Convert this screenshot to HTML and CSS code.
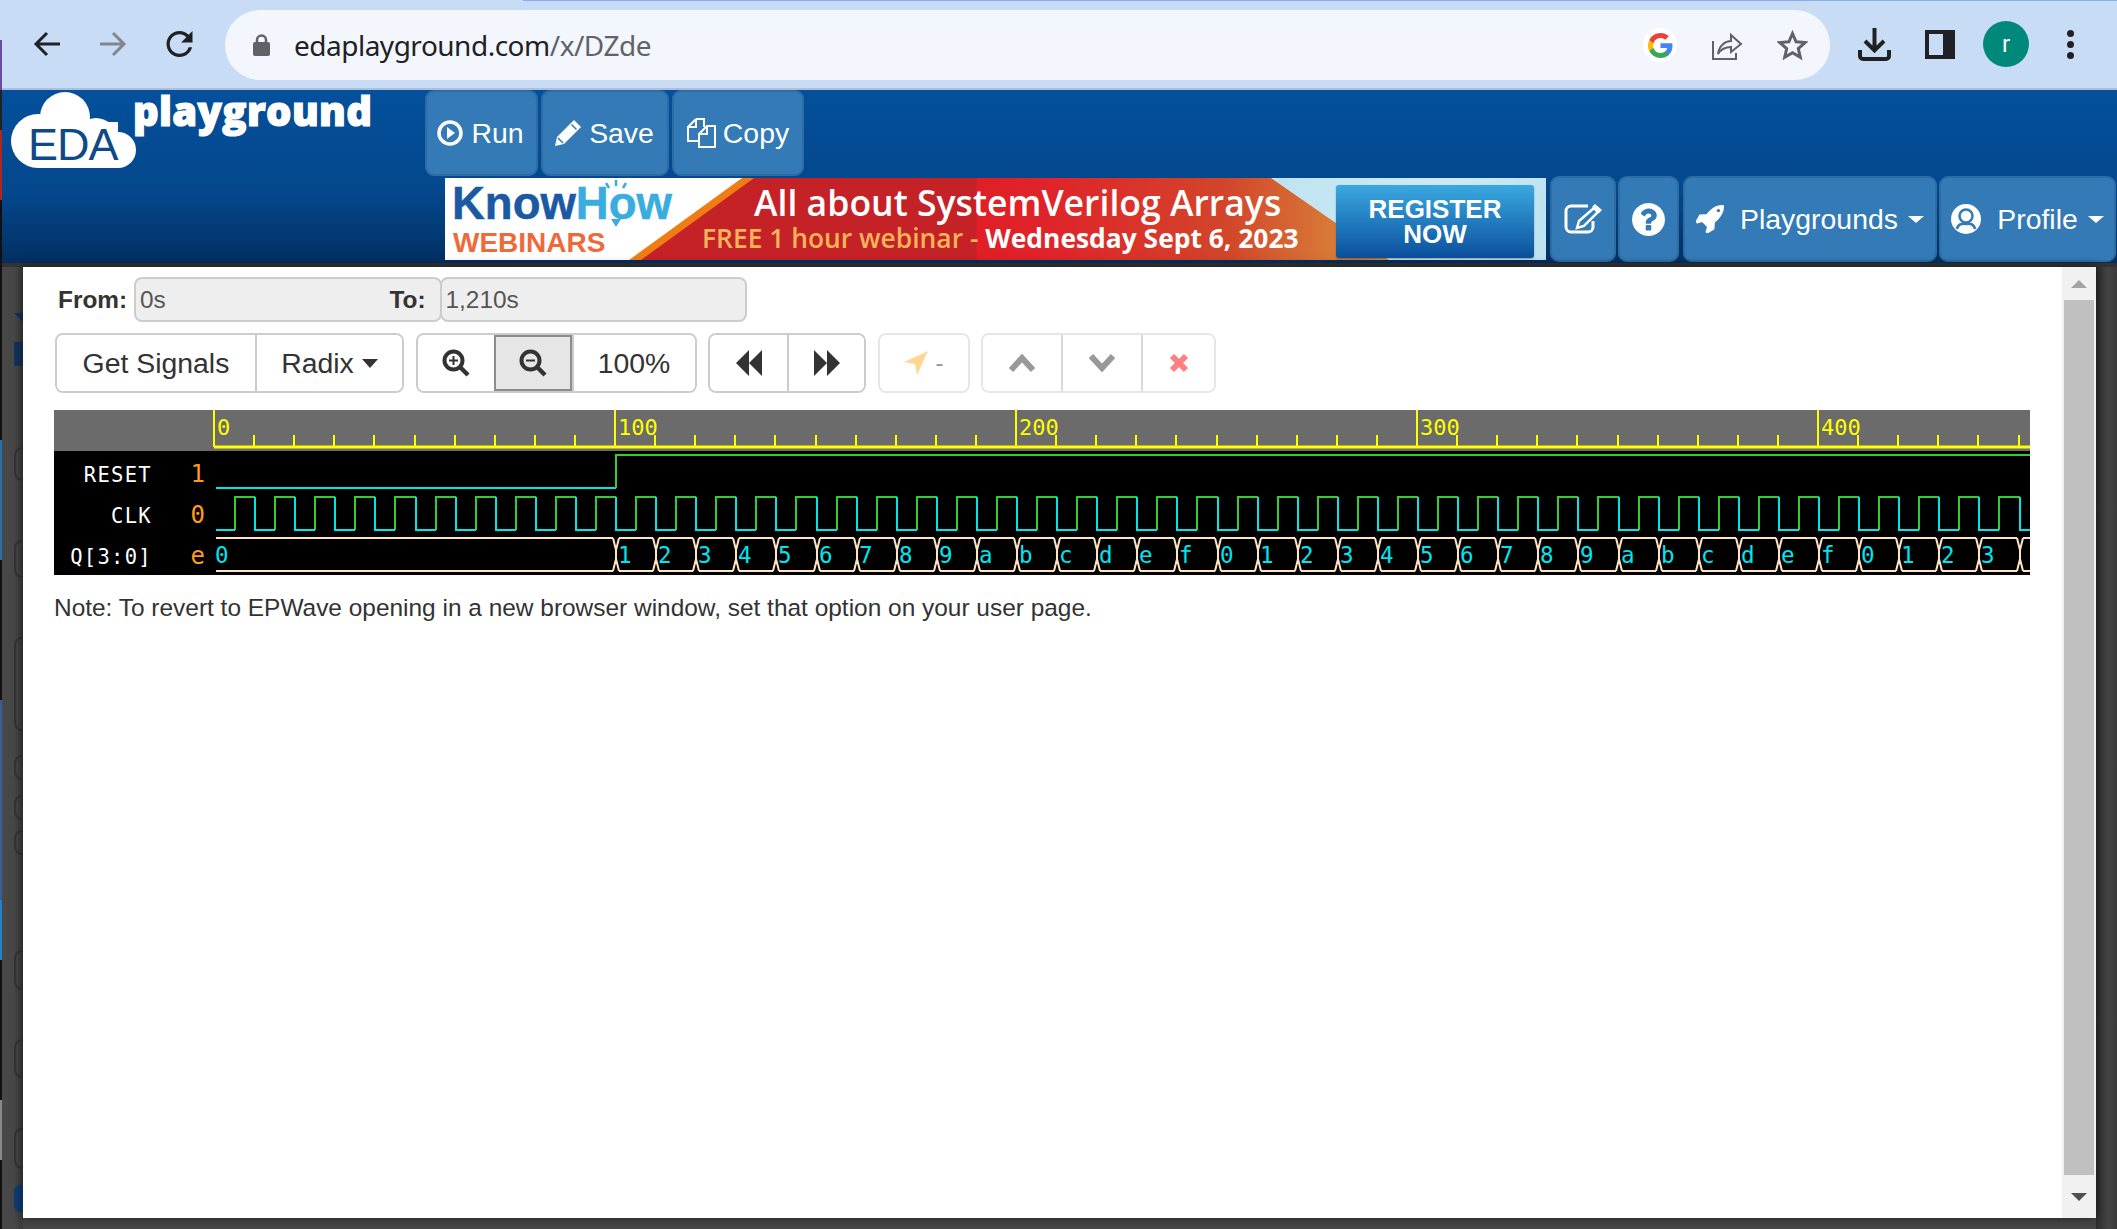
FILE: index.html
```html
<!DOCTYPE html>
<html lang="en">
<head>
<meta charset="utf-8">
<title>EDA Playground</title>
<link rel="stylesheet" href="styles.css">
</head>
<body>
<div class="edge"></div>
<header class="chrome">
  <div class="chrome-nav">
    <svg class="ci-back" viewBox="0 0 28 26"><path d="M27 13H3M14 2 3 13l11 11"/></svg>
    <svg class="ci-fwd" viewBox="0 0 28 26"><path d="M1 13h24M14 2l11 11-11 11"/></svg>
    <svg class="ci-reload" viewBox="4 4 16 16"><path d="M17.65 6.35A7.958 7.958 0 0012 4c-4.42 0-7.99 3.58-7.99 8s3.57 8 7.99 8c3.73 0 6.84-2.55 7.73-6h-2.08A5.99 5.99 0 0112 18c-3.31 0-6-2.69-6-6s2.69-6 6-6c1.66 0 3.14.69 4.22 1.78L13 11h7V4l-2.35 2.35z"/></svg>
  </div>
  <div class="omnibox">
    <svg class="ci-lock" viewBox="0 0 17 22"><path class="lock-shackle" d="M4 10V6a4.500 4.500 0 0 1 9 0v4"/><rect class="lock-body" x="0" y="8" width="17" height="14" rx="2"/></svg>
    <span class="url">edaplayground.com<span class="url-path">/x/DZde</span></span>
    <span class="omni-right">
      <span class="g-badge"><svg class="ci-g" viewBox="1 1 22 22"><path class="g-b" d="M22.56 12.25c0-.78-.07-1.53-.2-2.25H12v4.26h5.92c-.26 1.37-1.04 2.53-2.21 3.31v2.77h3.57c2.08-1.92 3.28-4.74 3.28-8.09z"/><path class="g-g" d="M12 23c2.97 0 5.46-.98 7.28-2.66l-3.57-2.77c-.98.66-2.23 1.06-3.71 1.06-2.86 0-5.29-1.93-6.16-4.53H2.18v2.84C3.99 20.53 7.7 23 12 23z"/><path class="g-y" d="M5.84 14.09c-.22-.66-.35-1.36-.35-2.09s.13-1.43.35-2.09V7.07H2.18C1.43 8.55 1 10.22 1 12s.43 3.45 1.18 4.93l2.85-2.22.81-.62z"/><path class="g-r" d="M12 5.38c1.62 0 3.06.56 4.21 1.64l3.15-3.15C17.45 2.09 14.97 1 12 1 7.7 1 3.99 3.47 2.18 7.07l3.66 2.84c.87-2.6 3.3-4.53 6.16-4.53z"/></svg></span>
      <svg class="ci-share" viewBox="0 0 31 29"><path d="M1 10v18h23v-6"/><path d="M6 23c1-8 7-13 13-13V4l10 9-10 8v-5c-5 0-10 2-13 7z"/></svg>
      <svg class="ci-star" viewBox="0 0 31 30"><path d="M15.500 3.500l3.600 8.300 9 .8-6.800 5.900 2 8.800-7.800-4.600-7.800 4.600 2-8.800L2.900 12.600l9-.8z"/></svg>
    </span>
  </div>
  <div class="chrome-right">
    <svg class="ci-dl" viewBox="0 0 33 33"><path d="M16.500 0v22M7 13l9.500 9.500L26 13M2 22v6a3 3 0 0 0 3 3h23a3 3 0 0 0 3-3v-6"/></svg>
    <span class="ci-panel"></span>
    <span class="avatar">r</span>
    <span class="dots"><i></i><i></i><i></i></span>
  </div>
</header>

<nav class="site-nav">
  <div class="nav-row-a">
    <a class="logo">
      <svg class="logo-cloud" viewBox="0 0 126 77">
        <circle cx="54" cy="25" r="25"/><circle cx="27" cy="49" r="27"/><circle cx="107" cy="58" r="18"/><circle cx="85" cy="46" r="20"/><rect x="27" y="30" width="80" height="46"/>
        <text class="logo-eda" x="17" y="68">EDA</text>
      </svg>
      <span class="logo-word">playground</span>
    </a>
    <button class="nbtn nb-run"><svg class="ni ni-run" viewBox="0 0 26 26"><circle class="ring" cx="13" cy="13" r="11"/><path class="solid" d="M10 7l8 6-8 6z"/></svg>Run</button>
    <button class="nbtn nb-save"><svg class="ni ni-save" viewBox="0 0 26 26"><path class="solid" d="M19 0l7 7L9 24 0 26l2-9z"/><path class="cut" d="M16.500 4.500l5 5M3 18l5 5"/></svg>Save</button>
    <button class="nbtn nb-copy"><svg class="ni ni-copy" viewBox="0 0 29 30"><path class="line" d="M9 1h8v8M9 1 1 9v14h11"/><path class="line" d="M20 8h8v21H12V16zM20 8v8h-8M9 1v8H1"/></svg>Copy</button>
  </div>
  <div class="nav-row-b">
    <div class="banner">
      <div class="bn-stripe"></div>
      <div class="bn-red"></div>
      <div class="bn-kh"><span class="bn-know">Know</span><span class="bn-how">How</span></div>
      <svg class="bn-bulb" viewBox="0 0 30 52"><path d="M15 1v6M5 4l3 5M25 4l-3 5"/><path class="bulb-tail" d="M10 40h10l-5 8z"/></svg>
      <div class="bn-web">WEBINARS</div>
      <div class="bn-title">All about SystemVerilog Arrays</div>
      <div class="bn-sub"><span class="bn-free">FREE 1 hour webinar - </span><b>Wednesday Sept 6, 2023</b></div>
      <div class="bn-cta">REGISTER<br>NOW</div>
    </div>
    <button class="nbtn nb-edit"><svg class="ni ni-edit" viewBox="0 0 38 30"><path class="line3" d="M24 2H7a5 5 0 0 0-5 5v16a5 5 0 0 0 5 5h17a5 5 0 0 0 5-5v-6"/><path class="line2" d="M30 4l4 4-14 14-7 2 2-7z"/><path class="solid" d="M31 0l7 6-3 3-7-6z"/></svg></button>
    <button class="nbtn nb-help"><svg class="ni ni-help" viewBox="128 128 1536 1536"><path class="solid" d="M1024 1376v-192q0-14-9-23t-23-9h-192q-14 0-23 9t-9 23v192q0 14 9 23t23 9h192q14 0 23-9t9-23zm256-672q0-88-55.500-163t-138.500-116-170-41q-243 0-371 213-15 24 8 42l132 100q7 6 19 6 16 0 25-12 53-68 86-92 34-24 86-24 48 0 85.500 26t37.500 59q0 38-20 61t-68 45q-63 28-115.500 86.500t-52.500 125.500v36q0 14 9 23t23 9h192q14 0 23-9t9-23q0-19 21.500-49.500t54.500-49.500q32-18 49-28.500t46-35 44.500-48 28-60.500 12.500-81zm384 192q0 209-103 385.500t-279.500 279.500-385.500 103-385.500-103-279.500-279.500-103-385.500 103-385.500 279.500-279.500 385.500-103 385.500 103 279.500 279.500 103 385.500z"/></svg></button>
    <button class="nbtn nb-play"><svg class="ni ni-rocket" viewBox="128 128 1600 1600"><path class="solid" d="M1504 448q0-40-28-68t-68-28-68 28-28 68 28 68 68 28 68-28 28-68zm224-288q0 249-75.500 430.500t-253.500 360.500q-81 80-195 176l-20 379q-2 16-16 26l-384 224q-7 4-16 4-12 0-23-9l-64-64q-13-14-8-32l85-276-281-281-276 85q-3 1-9 1-14 0-23-9l-64-64q-17-19-5-39l224-384q10-14 26-16l379-20q96-114 176-195 188-187 358-258t431-71q14 0 24 9.500t10 22.500z"/></svg>Playgrounds<span class="caret"></span></button>
    <button class="nbtn nb-profile"><svg class="ni ni-user" viewBox="0 0 30 30"><circle class="solid" cx="15" cy="15" r="15"/><circle class="head" cx="15" cy="12" r="6.500"/><path class="shoulder" d="M6 25c1-5 5-6 9-5 4-1 8 0 9 5"/></svg>Profile<span class="caret"></span></button>
  </div>
</nav>
<div class="nav-shade"></div>

<main class="stage">
  <aside class="gutter">
    <i class="g-tri"></i><i class="g-l"></i>
    <i class="ghost g1"></i><i class="ghost g2"></i><i class="ghost g3"></i><i class="ghost g4"></i><i class="ghost g5"></i><i class="ghost g6"></i><i class="ghost g7"></i><i class="ghost g8"></i><i class="ghost g9"></i><i class="g-blue"></i>
  </aside>
  <section class="modal">
    <div class="content">
      <div class="range">
        <label class="from-label">From:</label>
        <div class="field field-from"><span>0s</span><b class="to-label">To:</b></div>
        <div class="field field-to"><span>1,210s</span></div>
      </div>
      <div class="toolbar">
        <div class="group">
          <button class="tb w198">Get Signals</button>
          <button class="tb w147">Radix<span class="tcaret"></span></button>
        </div>
        <div class="group">
          <button class="tb w76"><svg class="ti" viewBox="0 0 28 28"><circle class="mag" cx="11.500" cy="11.500" r="9"/><path class="mag-h" d="M18 18l8 8"/><path class="mag-s" d="M7 11.500h9M11.500 7v9"/></svg></button>
          <button class="tb w78 active"><svg class="ti" viewBox="0 0 28 28"><circle class="mag" cx="11.500" cy="11.500" r="9"/><path class="mag-h" d="M18 18l8 8"/><path class="mag-s" d="M7 11.500h9"/></svg></button>
          <button class="tb w123">100%</button>
        </div>
        <div class="group">
          <button class="tb w77"><svg class="ti ti-seek" viewBox="0 0 26 26"><path d="M13 0v26L0 13zM26 0v26L13 13z"/></svg></button>
          <button class="tb w77"><svg class="ti ti-seek" viewBox="0 0 26 26"><path d="M0 0v26l13-13zM13 0v26l13-13z"/></svg></button>
        </div>
        <div class="group off">
          <button class="tb w88"><svg class="ti ti-nav" viewBox="0 0 24 24"><path d="M24 0 13 24l-2-11L0 11z"/></svg><span class="dash">-</span></button>
        </div>
        <div class="group off">
          <button class="tb w78b"><svg class="ti ti-chev" viewBox="0 0 26 18"><path d="M2 16 13 4l11 12"/></svg></button>
          <button class="tb w80"><svg class="ti ti-chev" viewBox="0 0 26 18"><path d="M2 2l11 12L24 2"/></svg></button>
          <button class="tb w73"><svg class="ti ti-x" viewBox="0 0 20 20"><path d="M3 3l14 14M17 3 3 17"/></svg></button>
        </div>
      </div>
      <svg id="wave" class="wave" viewBox="0 0 1976 165" width="1976" height="165"></svg>
      <p class="note">Note: To revert to EPWave opening in a new browser window, set that option on your user page.</p>
    </div>
    <div class="scrollbar">
      <span class="sb-btn"><i class="sb-up"></i></span>
      <span class="sb-thumb"></span>
      <span class="sb-btn sb-btn-b"><i class="sb-down"></i></span>
    </div>
  </section>
  <aside class="gutter-r"></aside>
</main>
<script src="wave.js"></script>
</body>
</html>
```

FILE: styles.css
```css
* { box-sizing: border-box; }
html, body { margin: 0; padding: 0; }
body { position: relative; width: 2117px; height: 1229px; overflow: hidden; background: #474747; font-family: "Liberation Sans", Arial, sans-serif; color: #333; }
button { font-family: inherit; cursor: default; }

.edge { position: absolute; left: 0; top: 0; bottom: 0; width: 2px; z-index: 5; background: linear-gradient(180deg, #c9dcf6 0 40px, #6a4ea0 40px 90px, #222 90px 130px, #b0261e 130px 200px, #111 200px 440px, #2a6ea8 440px 560px, #111 560px 700px, #3a5f95 700px 900px, #2282c8 900px 960px, #111 960px 1100px, #8a8a8a 1100px 1160px, #111 1160px); }

/* browser chrome */
.chrome { height: 90px; display: flex; align-items: flex-start; background-color: #c9dcf6; background-image: linear-gradient(#85aeea, #85aeea); background-size: 1594px 1px; background-position: right top; background-repeat: no-repeat; border-bottom: 2px solid #aebfd8; }
.chrome-nav { width: 225px; height: 88px; flex: none; display: flex; align-items: center; padding-left: 33px; }
.chrome-nav svg { flex: none; }
.ci-back, .ci-fwd { width: 28px; height: 26px; fill: none; stroke-width: 3px; }
.ci-back { stroke: #202124; }
.ci-fwd { stroke: #80868b; margin-left: 38px; }
.ci-reload { width: 29px; height: 26px; fill: #202124; margin-left: 38px; }
.omnibox { width: 1605px; height: 70px; margin-top: 10px; background: #f3f7fd; border-radius: 35px; display: flex; align-items: center; padding-left: 28px; }
.ci-lock { width: 17px; height: 22px; flex: none; }
.lock-shackle { fill: none; stroke: #5f6368; stroke-width: 2.5px; }
.lock-body { fill: #5f6368; }
.url { margin-left: 24px; font-family: "Noto Sans", sans-serif; font-size: 28px; color: #202124; letter-spacing: -.5px; }
.url-path { color: #5f6368; }
.omni-right { margin-left: auto; display: flex; align-items: center; }
.g-badge { width: 34px; height: 34px; border-radius: 50%; background: #fff; display: flex; align-items: center; justify-content: center; margin-right: 35px; }
.ci-g { width: 25px; height: 25px; }
.g-b { fill: #4285f4; } .g-g { fill: #34a853; } .g-y { fill: #fbbc05; } .g-r { fill: #ea4335; }
.ci-share { width: 31px; height: 29px; fill: none; stroke: #5f6368; stroke-width: 2px; margin-right: 34px; }
.ci-star { width: 31px; height: 30px; fill: none; stroke: #5f6368; stroke-width: 3px; margin-right: 22px; }
.chrome-right { flex: 1; height: 88px; display: flex; align-items: center; }
.ci-dl { width: 33px; height: 33px; margin-left: 28px; fill: none; stroke: #202124; stroke-width: 4px; flex: none; }
.ci-panel { width: 30px; height: 29px; margin-left: 34px; flex: none; background: linear-gradient(90deg, transparent 0 14px, #202124 14px); border: 4px solid #202124; }
.avatar { width: 46px; height: 46px; margin-left: 28px; border-radius: 50%; background: #00897b; color: #fff; font-family: "Roboto", sans-serif; font-size: 24px; display: flex; align-items: center; justify-content: center; flex: none; }
.dots { margin-left: 38px; display: flex; flex-direction: column; gap: 4px; }
.dots i { display: block; width: 7px; height: 7px; border-radius: 50%; background: #202124; }

/* site nav */
.site-nav { height: 173px; background: linear-gradient(180deg, #04509c 0, #04478c 60%, #032f62 100%); }
.nav-shade { height: 4px; background: #333; }
.nav-row-a { height: 86px; display: flex; align-items: stretch; gap: 3px; }
.nav-row-b { height: 87px; display: flex; align-items: flex-start; padding-left: 445px; }
.logo { position: relative; display: block; width: 422px; flex: none; color: #fff; }
.logo-cloud { position: absolute; left: 11px; top: 2px; width: 126px; height: 77px; fill: #fff; }
.logo-eda { font-family: "Liberation Sans", sans-serif; font-size: 45px; fill: #0f4a86; letter-spacing: -1px; }
.logo-word { position: absolute; left: 133px; top: -7px; font-family: "Open Sans", sans-serif; font-weight: 800; font-size: 40px; letter-spacing: .35px; -webkit-text-stroke: 1.2px #fff; }
.nbtn { display: flex; align-items: center; justify-content: center; padding: 0; background: #337ab7; border: 2px solid #2e6da4; border-radius: 9px; color: #fff; font-size: 28.4px; flex: none; }
.nb-run { width: 113px; }
.nb-save { width: 128px; }
.nb-copy { width: 132px; }
.nb-edit { width: 66px; height: 86px; margin-left: 4px; }
.nb-help { width: 61px; height: 86px; margin-left: 2px; }
.nb-play { width: 254px; height: 86px; margin-left: 4px; }
.nb-profile { width: 177px; height: 86px; margin-left: 2px; }
.ni { flex: none; }
.solid { fill: #fff; }
.ring { fill: none; stroke: #fff; stroke-width: 3.5px; }
.cut { fill: none; stroke: #337ab7; stroke-width: 1.5px; }
.line { fill: none; stroke: #fff; stroke-width: 2px; }
.line2 { fill: none; stroke: #fff; stroke-width: 2.5px; }
.line3 { fill: none; stroke: #fff; stroke-width: 3px; }
.head { fill: #fff; stroke: #337ab7; stroke-width: 2.5px; }
.shoulder { fill: none; stroke: #337ab7; stroke-width: 2.5px; }
.ni-run { width: 26px; height: 26px; margin-right: 8px; margin-left: -2px; }
.ni-save { width: 26px; height: 26px; margin-right: 8px; margin-left: -1px; }
.ni-copy { width: 29px; height: 30px; margin-right: 7px; }
.ni-edit { width: 38px; height: 30px; }
.ni-help { width: 33px; height: 33px; }
.ni-rocket { width: 28px; height: 28px; margin-right: 16px; }
.ni-user { width: 30px; height: 30px; margin-right: 16px; }
.caret { display: inline-block; width: 0; height: 0; margin-left: 10px; border-left: 8px solid transparent; border-right: 8px solid transparent; border-top: 7px solid #fff; }

/* banner */
.banner { position: relative; width: 1101px; height: 82px; margin-top: 2px; flex: none; overflow: hidden; background: linear-gradient(100deg, #fff 0 60%, #bfe4f1 75%, #cfeaf4 90%, #bde3f0 100%); color: #fff; }
.bn-stripe { position: absolute; inset: 0; background: #f07d14; clip-path: polygon(297px 0, 310px 0, 197px 82px, 184px 82px); }
.bn-red { position: absolute; inset: 0; background: linear-gradient(90deg, #c52228 0 531px, #e01f26 532px, #e0232a 600px, #d2452a 780px, #d98038 900px, #dd9040 950px); clip-path: polygon(309px 0, 826px 0, 944px 82px, 196px 82px); }
.bn-kh { position: absolute; left: 7px; top: 0; font-weight: 700; font-size: 45.5px; line-height: 52px; letter-spacing: 0; -webkit-text-stroke: .5px currentColor; white-space: nowrap; }
.bn-know { color: #1b5aa3; }
.bn-how { color: #39ace0; }
.bn-bulb { position: absolute; left: 156px; top: 1px; width: 30px; height: 52px; fill: none; stroke: #39ace0; stroke-width: 2.5px; }
.bulb-tail { fill: #39ace0; stroke: none; }
.bn-web { position: absolute; left: 8px; top: 50px; color: #ef6a3a; font-weight: 700; font-size: 28px; line-height: 30px; white-space: nowrap; }
.bn-title { position: absolute; left: 309px; top: 2px; font-family: "Open Sans", sans-serif; font-weight: 600; font-size: 35.6px; line-height: 44px; white-space: nowrap; }
.bn-sub { position: absolute; left: 257px; top: 42px; font-family: "Open Sans", sans-serif; font-size: 26.4px; line-height: 36px; font-weight: 600; white-space: nowrap; }
.bn-free { color: #f6b45a; }
.bn-sub b { font-weight: 700; }
.bn-cta { position: absolute; left: 891px; top: 7px; width: 198px; height: 73px; border-radius: 3px; background: linear-gradient(180deg, #3aa9e0, #0b4f9c); font-weight: 700; font-size: 26px; line-height: 25px; text-align: center; padding-top: 12px; box-shadow: 0 1px 2px rgba(0,0,0,.3); }

/* backdrop */
.stage { display: flex; height: 962px; }
.gutter { width: 23px; flex: none; display: flex; flex-direction: column; align-items: flex-start; padding-left: 14px; overflow: hidden; background: linear-gradient(90deg, #484848 0 14px, #3c3c3c 23px); }
.gutter i { display: block; flex: none; }
.ghost { width: 30px; border: 2px solid #333; border-radius: 8px; }
.g-tri { width: 0; height: 0; margin-top: 46px; border-left: 10px solid transparent; border-right: 10px solid transparent; border-top: 10px solid #12305a; }
.g-l { width: 9px; height: 24px; margin-top: 19px; background: #14345c; }
.g1 { height: 34px; margin-top: 81px; }
.g2 { height: 38px; margin-top: 59px; }
.g3 { height: 94px; margin-top: 59px; }
.g4 { height: 25px; margin-top: 24px; }
.g5 { height: 25px; margin-top: 15px; }
.g6 { height: 25px; margin-top: 10px; }
.g7 { height: 40px; margin-top: 95px; }
.g8 { height: 39px; margin-top: 49px; }
.g9 { height: 41px; margin-top: 50px; }
.g-blue { width: 30px; height: 27px; margin-top: 16px; background: #0d3c72; border-radius: 6px; }
.gutter-r { width: 21px; flex: none; background: linear-gradient(90deg, #2e2e2e 0, #454545 60%, #3a3a3a 100%); }
.modal { position: relative; width: 2073px; height: 951px; flex: none; display: flex; background: #fff; box-shadow: 0 0 10px rgba(0,0,0,.55); }
.content { flex: 1; min-width: 0; padding: 10px 0 0 31px; }
.range { display: flex; align-items: center; height: 45px; font-size: 24.4px; }
.from-label { width: 80px; padding-left: 4px; font-weight: 700; }
.field { display: flex; justify-content: space-between; align-items: center; width: 307.5px; height: 45px; padding: 0 14px 0 4px; background: #eee; border: 2px solid #ccc; border-radius: 8px; color: #555; }
.field-to { margin-left: -2px; }
.to-label { color: #333; }
.toolbar { display: flex; gap: 11.5px; margin-top: 11px; margin-left: 1px; }
.group { display: flex; height: 60px; border: 2px solid #ccc; border-radius: 8px; overflow: hidden; }
.group.off { border-color: #e6e6e6; }
.tb { height: 100%; padding: 0; margin: 0; display: flex; align-items: center; justify-content: center; background: #fff; border: 0; border-left: 2px solid #ccc; color: #333; font-size: 28.4px; flex: none; }
.tb:first-child { border-left: 0; }
.off .tb { border-left-color: #d9d9d9; }
.tb.active { background: #e6e6e6; box-shadow: 0 0 0 2px #8c8c8c inset; border-left: 0; }
.w198 { width: 198px; } .w147 { width: 147px; } .w76 { width: 76px; } .w78 { width: 78px; } .w123 { width: 123px; } .w77 { width: 77px; } .w88 { width: 88px; } .w78b { width: 78px; } .w80 { width: 80px; } .w73 { width: 73px; }
.tcaret { display: inline-block; width: 0; height: 0; margin-left: 8px; border-left: 8px solid transparent; border-right: 8px solid transparent; border-top: 9px solid #333; }
.ti { width: 28px; height: 28px; flex: none; }
.mag { fill: none; stroke: #333; stroke-width: 4px; }
.mag-h { fill: none; stroke: #333; stroke-width: 4.5px; }
.mag-s { fill: none; stroke: #333; stroke-width: 2px; }
.ti-seek { width: 26px; height: 26px; fill: #333; }
.ti-nav { width: 24px; height: 24px; fill: #ffd78f; }
.dash { margin-left: 8px; color: #999; font-size: 24px; }
.ti-chev { width: 26px; height: 18px; fill: none; stroke: #999; stroke-width: 6px; }
.ti-x { width: 20px; height: 20px; fill: none; stroke: #ff8080; stroke-width: 6px; }

/* waveform */
.wave { display: block; margin-top: 17px; background: #000; font-family: "DejaVu Sans Mono", monospace; }
.w-head { fill: #6b6b6b; }
.w-ruler { fill: none; stroke: #ff0; stroke-width: 2px; }
.w-base { fill: none; stroke: #ff0; stroke-width: 3px; }
.w-time { fill: #ff0; font-size: 22px; }
.w-name { fill: #fff; font-size: 20.5px; letter-spacing: 1.3px; text-anchor: end; }
.w-val { fill: #ff9a1e; font-size: 24px; text-anchor: end; }
.w-high { fill: none; stroke: #33cc33; stroke-width: 2px; }
.w-low { fill: none; stroke: #00e6e6; stroke-width: 2px; }
.w-bus { fill: none; stroke: #ffe4c4; stroke-width: 2px; }
.w-hex { fill: #00e6f0; font-size: 22.5px; }
.note { margin: 16px 0 0; font-size: 24.45px; line-height: 34px; color: #333; }

/* scrollbar */
.scrollbar { width: 34px; flex: none; display: flex; flex-direction: column; align-items: center; background: #f1f1f1; }
.sb-btn { height: 33px; flex: none; display: flex; align-items: center; justify-content: center; }
.sb-btn-b { height: 43px; }
.sb-up { width: 0; height: 0; border-left: 8px solid transparent; border-right: 8px solid transparent; border-bottom: 8px solid #a3a3a3; }
.sb-down { width: 0; height: 0; border-left: 8px solid transparent; border-right: 8px solid transparent; border-top: 8px solid #505050; }
.sb-thumb { width: 30px; flex: 1; background: #c0c0c0; }
```

FILE: wave.js
```js
(function () {
  var NS = 'http://www.w3.org/2000/svg';
  var svg = document.getElementById('wave');
  var END = 1976;
  function rx(t) { return 160 + 4.01 * t; }
  function sx(t) { return 161 + 4.01 * t; }
  function el(tag, cls, attrs, text) {
    var e = document.createElementNS(NS, tag);
    e.setAttribute('class', cls);
    for (var k in attrs) e.setAttribute(k, attrs[k]);
    if (text !== undefined) e.textContent = text;
    svg.appendChild(e);
  }
  function path(cls, d) { el('path', cls, { d: d }); }
  function text(cls, x, y, s) { el('text', cls, { x: x, y: y }, s); }

  el('rect', 'w-head', { x: 0, y: 0, width: END, height: 41 });

  // ruler
  var ticks = '';
  for (var t = 0; t <= 450; t += 10) {
    var x = Math.round(rx(t));
    ticks += 'M' + x + ' ' + (t % 100 === 0 ? 0 : 25) + 'V37';
    if (t % 100 === 0) text('w-time', x + 3, 25, String(t));
  }
  path('w-ruler', ticks);
  path('w-base', 'M' + Math.round(rx(0)) + ' 37H' + END);

  // names and values
  [['RESET', '1', 72], ['CLK', '0', 113], ['Q[3:0]', 'e', 154]].forEach(function (r) {
    text('w-name', 98, r[2], r[0]);
    text('w-val', 151, r[2], r[1]);
  });

  // RESET
  path('w-low', 'M162 78H' + sx(100));
  path('w-high', 'M' + sx(100) + ' 78V45H' + END);

  // CLK
  var hi = '', lo = 'M162 120H' + sx(5);
  for (t = 5; rx(t) < END; t += 10) {
    var r = Math.round(sx(t)), f = Math.round(sx(t + 5)), n = Math.round(sx(t + 10));
    hi += 'M' + r + ' 120V87H' + Math.min(f, END);
    if (f < END) lo += 'M' + f + ' 87V120H' + Math.min(n, END);
  }
  path('w-high', hi);
  path('w-low', lo);

  // Q[3:0]
  var top = 128, bot = 161, bus = 'M162 ' + top + 'H' + (sx(100) - 3) + 'M162 ' + bot + 'H' + (sx(100) - 3);
  text('w-hex', 161, 153, '0');
  for (t = 100; t <= 450; t += 10) {
    var c = Math.round(sx(t)), d = Math.min(Math.round(sx(t + 10)) - 3, END);
    bus += 'M' + (c - 3) + ' ' + top + 'L' + c + ' ' + (top + 12) + 'V' + (bot - 12) + 'L' + (c - 3) + ' ' + bot;
    bus += 'M' + (c + 3) + ' ' + top + 'L' + c + ' ' + (top + 12) + 'V' + (bot - 12) + 'L' + (c + 3) + ' ' + bot;
    bus += 'M' + (c + 3) + ' ' + top + 'H' + d + 'M' + (c + 3) + ' ' + bot + 'H' + d;
    if (t < 450) text('w-hex', c + 2, 153, ((t / 10 - 9) % 16).toString(16));
  }
  path('w-bus', bus);
})();
```
